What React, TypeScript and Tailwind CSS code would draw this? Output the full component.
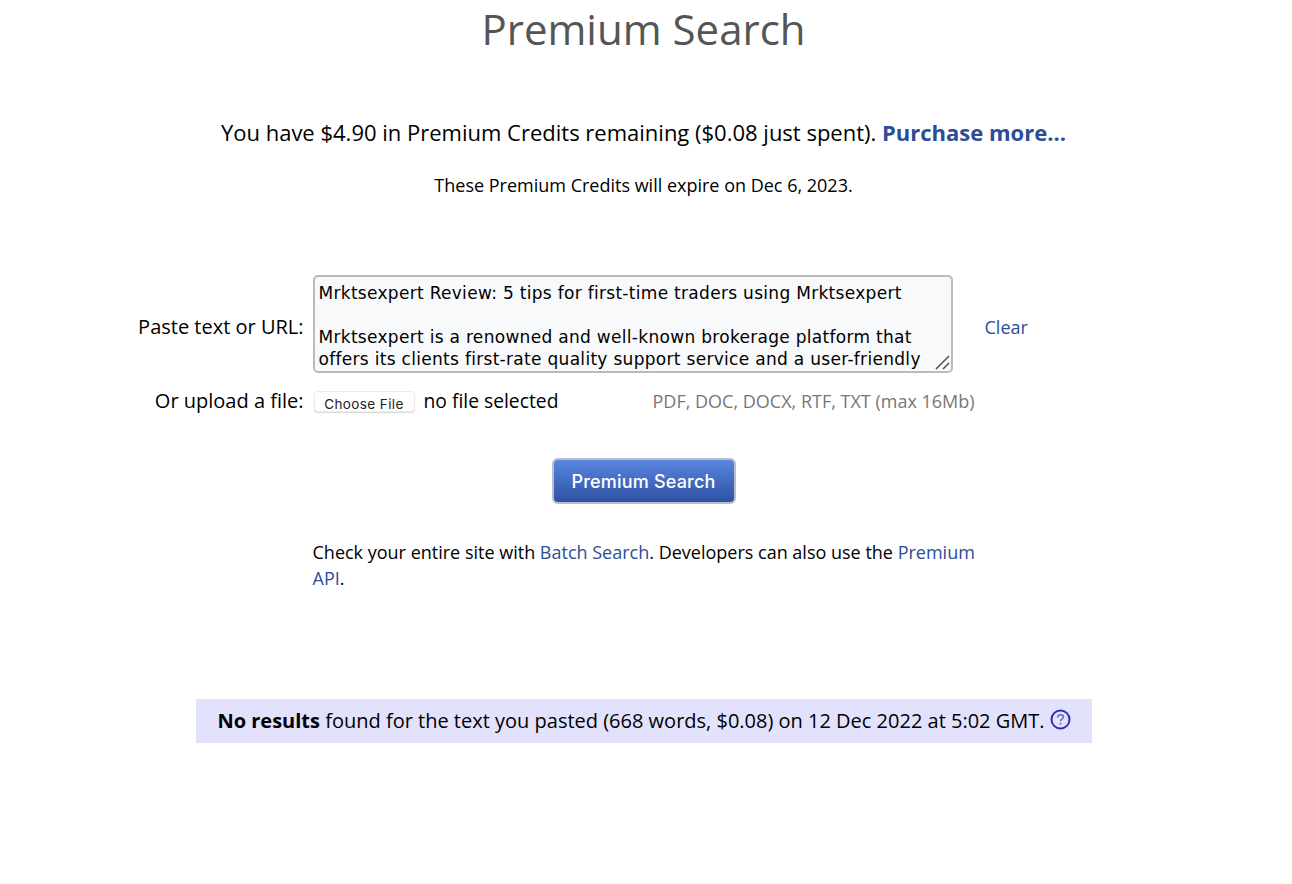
export default function App() {
  return (
    <div className="w-full h-[884px] bg-white text-black font-['Open_Sans',sans-serif] overflow-hidden flex flex-col items-center pr-[5px]">
      <h1 className="text-[42px] leading-[58px] text-[#555555] font-normal">Premium Search</h1>

      <p className="mt-[59px] text-[22px] leading-[30px]">
        You have $4.90 in Premium Credits remaining ($0.08 just spent).{" "}
        <a className="font-bold text-[#2c4d96]">Purchase more...</a>
      </p>
      <p className="mt-[26px] text-[18px] leading-[24px]">These Premium Credits will expire on Dec 6, 2023.</p>

      {/* form */}
      <div className="mt-[78px] w-[1012px]">
        <div className="flex items-center">
          <label className="w-[166px] text-right text-[20px] leading-[28px] whitespace-nowrap shrink-0 mt-[6px]">Paste text or URL:</label>
          <div className="ml-[9px] w-[640px] h-[98px] relative shrink-0 rounded-[5px] border-2 border-[#bbbbbb] bg-[#f8f9fa] pl-[4px] pt-[5px] font-['DejaVu_Sans',sans-serif] text-[17px] tracking-[0.3px] leading-[22px] overflow-hidden whitespace-nowrap">
            <div>Mrktsexpert Review: 5 tips for first-time traders using Mrktsexpert</div>
            <div className="h-[22px]" />
            <div>Mrktsexpert is a renowned and well-known brokerage platform that</div>
            <div>offers its clients first-rate quality support service and a user-friendly</div>
            <svg className="absolute right-0 bottom-0" width="18" height="18" viewBox="0 0 18 18" fill="none" stroke="#555555" strokeWidth="1.6">
              <path d="M3 16 L16 3" />
              <path d="M10 16 L16 10" />
            </svg>
          </div>
          <a className="ml-[32px] text-[#2c4d96] text-[18px] leading-[28px] mt-[6px]">Clear</a>
        </div>

        <div className="flex items-center mt-[14px]">
          <label className="w-[166px] text-right text-[20px] leading-[28px] whitespace-nowrap shrink-0">Or upload a file:</label>
          <div className="ml-[10px] w-[339px] flex items-center shrink-0">
            <button className="w-[101px] h-[21px] bg-white rounded-[4px] border border-[#ececec] shadow-[0_1px_1px_rgba(0,0,0,0.15)] text-[13.5px] tracking-[0.4px] text-[#222222] font-['Inter',sans-serif] pt-[2px]">
              Choose File
            </button>
            <span className="ml-[9px] text-[19.3px] leading-[28px]">no file selected</span>
          </div>
          <span className="text-[#777777] text-[18px] leading-[28px]">PDF, DOC, DOCX, RTF, TXT (max 16Mb)</span>
        </div>
      </div>

      <button className="mt-[43px] w-[184px] h-[46px] rounded-[6px] border-2 border-[#b9bfc9] bg-gradient-to-b from-[#5986e0] to-[#2f52a5] text-white text-[18px] font-medium tracking-[0.2px] font-['Inter',sans-serif]">
        Premium Search
      </button>

      <p className="mt-[35px] ml-[6px] w-[668px] text-[18px] leading-[26px]">
        Check your entire site with <a className="text-[#2c4d96]">Batch Search</a>. Developers can also use the{" "}
        <a className="text-[#2c4d96]">Premium API</a>.
      </p>

      <div className="mt-[108px] w-[896px] h-[44px] bg-[#e2e2fc] flex items-center justify-center text-[20px] pl-[1px]">
        <span>
          <b>No results</b> found for the text you pasted (668 words, $0.08) on 12 Dec 2022 at 5:02 GMT.
        </span>
        <svg className="ml-[5px] mb-[3px]" width="21" height="21" viewBox="0 0 21 21" fill="none">
          <circle cx="10.5" cy="10.5" r="9" stroke="#3030b0" strokeWidth="2" />
          <path d="M7.6 8.4c0-1.7 1.3-2.7 2.9-2.7s2.9 1 2.9 2.4c0 2-2.9 2.1-2.9 4.2" stroke="#6a6ac0" strokeWidth="1.6" />
          <circle cx="10.5" cy="14.8" r="1" fill="#6a6ac0" />
        </svg>
      </div>
    </div>
  );
}
